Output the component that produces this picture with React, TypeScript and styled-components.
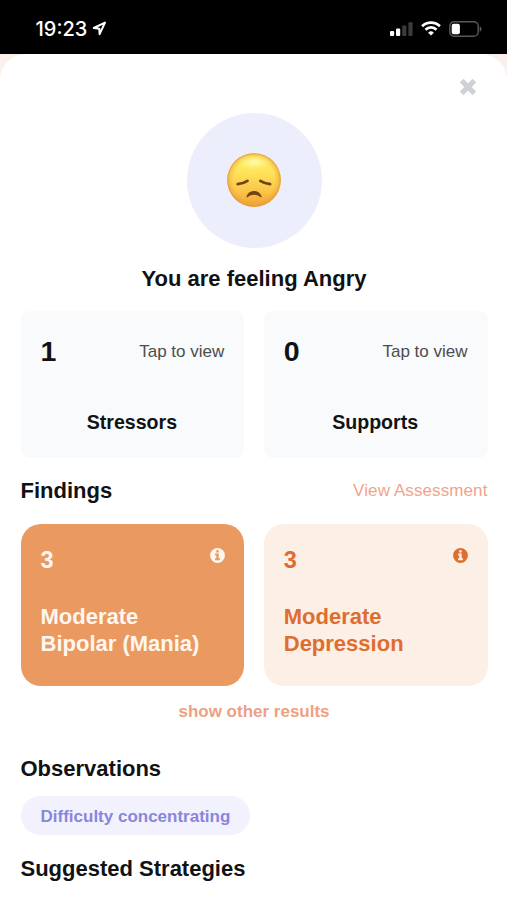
import React from "react";
import styled, { createGlobalStyle } from "styled-components";

const GlobalStyle = createGlobalStyle`
  * { box-sizing: border-box; }
  body {
    margin: 0;
    background: #fff;
    font-family: "Liberation Sans", Arial, sans-serif;
    color: #111214;
    overflow: hidden;
  }
`;

const Screen = styled.div`
  width: 507px;
  height: 900px;
  display: flex;
  flex-direction: column;
  background: linear-gradient(#faf1ed 0 100px, #fff 100px);
  overflow: hidden;
`;

const StatusBar = styled.header`
  height: 54.4px;
  flex: none;
  display: flex;
  align-items: center;
  justify-content: space-between;
  padding: 3px 25px 0 35.5px;
  background: #000;
  color: #fff;
`;

const Clock = styled.div`
  display: flex;
  align-items: center;
  gap: 5px;
  font: 500 20px/24px Inter, sans-serif;
`;

const StatusIcons = styled.div`
  display: flex;
  align-items: center;
  gap: 8px;
`;

const Sheet = styled.main`
  flex: 1;
  display: flex;
  flex-direction: column;
  padding: 23.6px 19.5px 0 20.5px;
  background: #fff;
  border-radius: 26px 26px 0 0;
`;

const CloseButton = styled.button`
  align-self: flex-end;
  display: flex;
  width: 18px;
  height: 18px;
  margin-right: 11px;
  padding: 0;
  border: 0;
  background: none;
`;

const Mood = styled.section`
  display: flex;
  flex-direction: column;
  align-items: center;
  margin-top: 17px;
`;

const MoodCircle = styled.div`
  width: 135px;
  height: 135px;
  display: grid;
  place-items: center;
  border-radius: 50%;
  background: #edeefc;
`;

const Heading = styled.h2`
  margin: 0;
  font-size: 22px;
  line-height: 26px;
  font-weight: 700;
  white-space: nowrap;
`;

const MoodHeading = styled(Heading)`
  margin-top: 18px;
`;

const CardGrid = styled.div<{ $top: number }>`
  display: grid;
  grid-template-columns: 1fr 1fr;
  gap: 19.5px;
  margin-top: ${(p) => p.$top}px;
`;

const CountCard = styled.article`
  height: 147px;
  padding: 24px 20px 0;
  border-radius: 9px;
  background: #f8fafb;
`;

const CardTop = styled.div`
  display: flex;
  justify-content: space-between;
  align-items: center;
`;

const Count = styled.span`
  margin-top: -1px;
  font-size: 28.5px;
  line-height: 34px;
  font-weight: 700;
`;

const Hint = styled.span`
  padding-top: 2px;
  font-size: 17px;
  line-height: 20px;
  color: #4c4d4f;
`;

const CardTitle = styled.h3`
  margin: 42px 0 0;
  padding-right: 1px;
  font-size: 19.6px;
  line-height: 24px;
  text-align: center;
`;

const SectionHead = styled.div`
  display: flex;
  justify-content: space-between;
  align-items: center;
  margin-top: 20px;
`;

const Link = styled.a<{ $strong?: boolean }>`
  font-size: 17px;
  line-height: 20px;
  letter-spacing: ${(p) => (p.$strong ? 0 : 0.1)}px;
  font-weight: ${(p) => (p.$strong ? 700 : 400)};
  color: ${(p) => (p.$strong ? "#eda184" : "#f0a48c")};
`;

const FindingCard = styled.article<{ $filled?: boolean }>`
  height: 162px;
  padding: 22px 19.5px 0 20px;
  border-radius: 20px;
  color: ${(p) => (p.$filled ? "#fff7ef" : "#de6e30")};
  background: ${(p) => (p.$filled ? "#ea9960" : "#fcefe5")};
`;

const FindingTop = styled.div`
  display: flex;
  justify-content: space-between;
  align-items: flex-start;
  svg { margin-top: 2px; }
`;

const Score = styled.span`
  padding-top: 1px;
  font-size: 23.5px;
  line-height: 27px;
  font-weight: 700;
`;

const FindingTitle = styled.h3`
  margin: 29px 0 0;
  font-size: 22px;
  line-height: 27px;
  white-space: nowrap;
`;

const MoreResults = styled.div`
  display: flex;
  justify-content: center;
  margin-top: 16px;
`;

const SectionTitle = styled(Heading)<{ $top: number }>`
  margin-top: ${(p) => p.$top}px;
`;

const Tag = styled.span`
  align-self: flex-start;
  height: 39px;
  margin-top: 14px;
  padding: 1px 20px 0;
  border-radius: 20px;
  background: #f1f2fe;
  color: #8985dc;
  font-size: 17px;
  line-height: 39px;
  font-weight: 700;
  white-space: nowrap;
`;

const LocationIcon = () => (
  <svg width="15" height="15" viewBox="0 0 15 15" fill="none" stroke="#fff" strokeWidth="2" strokeLinejoin="round">
    <path d="M13 1.6 1.8 7l5.5.8.3 5.4Z" />
  </svg>
);

const SignalIcon = () => (
  <svg width="23" height="14" viewBox="0 0 23 14">
    <rect x="0" y="9" width="4.2" height="5" rx="1.1" fill="#fff" />
    <rect x="6" y="6.5" width="4.2" height="7.5" rx="1.1" fill="#fff" />
    <rect x="12.2" y="3.5" width="4.2" height="10.5" rx="1.1" fill="#3b3b3d" />
    <rect x="18.4" y="0.2" width="4.2" height="13.8" rx="1.1" fill="#3b3b3d" />
  </svg>
);

const WifiIcon = () => (
  <svg width="20" height="15" viewBox="0 0 20 15" fill="none" stroke="#fff" strokeWidth="2.7">
    <path d="M1.1 5.2a12.7 12.7 0 0 1 17.8 0" />
    <path d="M4.5 8.7a7.9 7.9 0 0 1 11 0" />
    <path d="m10 14.6-2.9-2.9a4.1 4.1 0 0 1 5.8 0Z" fill="#fff" stroke="none" />
  </svg>
);

const BatteryIcon = () => (
  <svg width="33" height="16" viewBox="0 0 33 16">
    <rect x="0.8" y="0.8" width="28.4" height="14.4" rx="4.3" fill="none" stroke="#59595b" strokeWidth="1.4" />
    <rect x="2.7" y="2.7" width="8.2" height="10.6" rx="2" fill="#fff" />
    <path d="M30.7 5.2v5.6c2.4-1 2.4-4.6 0-5.6" fill="#59595b" />
  </svg>
);

const CloseIcon = () => (
  <svg width="18" height="18" viewBox="0 0 18 18" stroke="#ced2d7" strokeWidth="5.2">
    <path d="M2.6 2.6 15.4 15.4M15.4 2.6 2.6 15.4" />
  </svg>
);

const InfoIcon = ({ mark }: { mark: string }) => (
  <svg width="15" height="15" viewBox="0 0 15 15">
    <circle cx="7.5" cy="7.5" r="7.4" fill="currentColor" />
    <path d="M6.2 2.3h2.5v2.2H6.2ZM5.1 5.6h3.6v4.7h1.2v1.9H5.1v-1.9h1.2V7.4H5.1Z" fill={mark} />
  </svg>
);

const SadFace = () => (
  <svg width="54" height="54" viewBox="0 0 54 54">
    <defs>
      <linearGradient id="skin" x1="0" y1="0" x2="0" y2="1">
        <stop offset="0" stopColor="#fff064" />
        <stop offset="0.35" stopColor="#fee45b" />
        <stop offset="0.72" stopColor="#fbc448" />
        <stop offset="1" stopColor="#f1a034" />
      </linearGradient>
      <radialGradient id="rim">
        <stop offset="0.76" stopColor="#eda038" stopOpacity="0" />
        <stop offset="0.93" stopColor="#eda038" stopOpacity="0.45" />
        <stop offset="1" stopColor="#dc902e" stopOpacity="0.95" />
      </radialGradient>
      <radialGradient id="shine">
        <stop offset="0" stopColor="#fffcc0" stopOpacity="0.9" />
        <stop offset="1" stopColor="#fff47a" stopOpacity="0" />
      </radialGradient>
    </defs>
    <circle cx="27" cy="27" r="26.8" fill="url(#skin)" />
    <circle cx="27" cy="27" r="26.8" fill="url(#rim)" />
    <ellipse cx="27" cy="9.5" rx="18" ry="8" fill="url(#shine)" />
    <g fill="none" stroke="#704511" strokeWidth="2.7" strokeLinecap="round">
      <path d="M10.7 31.2q6-.9 9.8-3.4" />
      <path d="M33.3 27.8q3.8 2.5 9.8 3.4" />
    </g>
    <path d="M19.6 43.3c2.1-7 12.8-7 14.9 0 .3 1.2-.4 1.5-1.2.8-3.8-3.2-8.7-3.2-12.5 0-.8.7-1.5.4-1.2-.8Z" fill="#704511" />
  </svg>
);

const counts = [
  { value: 1, title: "Stressors" },
  { value: 0, title: "Supports" },
];

const findings = [
  { score: 3, level: "Moderate", name: "Bipolar (Mania)", filled: true },
  { score: 3, level: "Moderate", name: "Depression", filled: false },
];

export default function App() {
  return (
    <>
      <GlobalStyle />
      <Screen>
        <StatusBar>
          <Clock>
            19:23
            <LocationIcon />
          </Clock>
          <StatusIcons>
            <SignalIcon />
            <WifiIcon />
            <BatteryIcon />
          </StatusIcons>
        </StatusBar>
        <Sheet>
          <CloseButton aria-label="Close">
            <CloseIcon />
          </CloseButton>
          <Mood>
            <MoodCircle>
              <SadFace />
            </MoodCircle>
            <MoodHeading>You are feeling Angry</MoodHeading>
          </Mood>
          <CardGrid $top={19}>
            {counts.map((c) => (
              <CountCard key={c.title}>
                <CardTop>
                  <Count>{c.value}</Count>
                  <Hint>Tap to view</Hint>
                </CardTop>
                <CardTitle>{c.title}</CardTitle>
              </CountCard>
            ))}
          </CardGrid>
          <SectionHead>
            <Heading>Findings</Heading>
            <Link>View Assessment</Link>
          </SectionHead>
          <CardGrid $top={20}>
            {findings.map((f) => (
              <FindingCard key={f.name} $filled={f.filled}>
                <FindingTop>
                  <Score>{f.score}</Score>
                  <InfoIcon mark={f.filled ? "#ea9960" : "#fcefe5"} />
                </FindingTop>
                <FindingTitle>
                  {f.level}
                  <br />
                  {f.name}
                </FindingTitle>
              </FindingCard>
            ))}
          </CardGrid>
          <MoreResults>
            <Link $strong>show other results</Link>
          </MoreResults>
          <SectionTitle $top={34}>Observations</SectionTitle>
          <Tag>Difficulty concentrating</Tag>
          <SectionTitle $top={21}>Suggested Strategies</SectionTitle>
        </Sheet>
      </Screen>
    </>
  );
}
